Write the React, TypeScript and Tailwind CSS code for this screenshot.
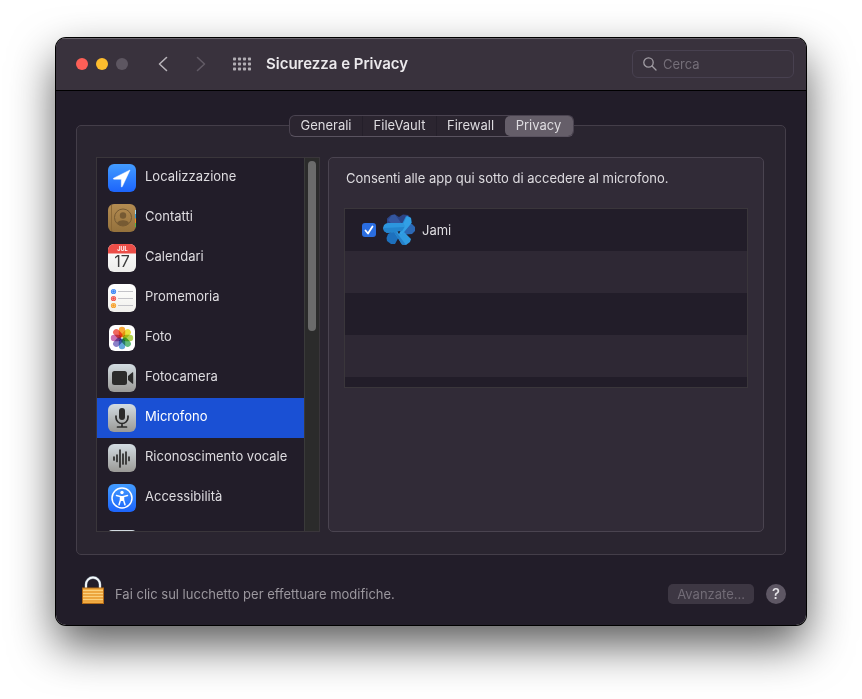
import type { ReactNode } from "react"
import clsx from "clsx"

const IconBase = ({ id, from, to, children }: { id: string; from: string; to: string; children: ReactNode }) => (
  <svg viewBox="0 0 28 28" className="size-7 shrink-0" aria-hidden="true">
    <defs>
      <linearGradient id={id} x1="0" y1="0" x2="0" y2="1">
        <stop offset="0" stopColor={from} />
        <stop offset="1" stopColor={to} />
      </linearGradient>
    </defs>
    <rect width="28" height="28" rx="6" fill={`url(#${id})`} />
    {children}
  </svg>
)

const LocationIcon = () => (
  <IconBase id="location" from="#439cff" to="#1c64fb">
    <path d="M22 6 5.6 14.2q-.9.8.4 1h7.3v7.3q.3 1.1 1 .1Z" fill="#fff" stroke="#fff" strokeWidth=".5" strokeLinejoin="round" />
  </IconBase>
)

const ContactsIcon = () => (
  <IconBase id="contacts" from="#b38b51" to="#94713c">
    <path d="M27 6h1v4h-1z" fill="#a9dcf2" />
    <path d="M27 10h1v4.500h-1z" fill="#2f9bd8" />
    <path d="M27 14.500h1V19h-1z" fill="#ee8d22" />
    <path d="M27 19h1v4h-1z" fill="#53b548" />
    <path d="M3.500 1v26" stroke="#8a6736" strokeWidth="1" />
    <circle cx="15" cy="13.500" r="8.500" fill="none" stroke="#765a33" strokeWidth="1" />
    <circle cx="15" cy="11.500" r="3.200" fill="#765a33" />
    <path d="M9 19.200c1-4 11-4 12 0a8 8 0 0 1-12 0Z" fill="#765a33" />
  </IconBase>
)

const CalendarIcon = () => (
  <IconBase id="calendar" from="#ffffff" to="#ededeb">
    <path d="M0 9.500V6a6 6 0 0 1 6-6h16a6 6 0 0 1 6 6v3.500Z" fill="#ec4e48" />
    <text x="14.500" y="7.200" textAnchor="middle" fontSize="5.500" fontWeight="700" fill="#fff">JUL</text>
    <text x="14" y="23" textAnchor="middle" fontSize="16" fill="#3c3c3c">17</text>
  </IconBase>
)

const reminders = [
  { y: 7.5, fill: "#2f7ff5" },
  { y: 14.5, fill: "#ee4b41" },
  { y: 21.5, fill: "#f59a1c" },
]

const RemindersIcon = () => (
  <IconBase id="reminders" from="#ffffff" to="#f1f0ec">
    <path d="M10 7.500h15M10 14.500h15M10 21.500h15" stroke="#c3c3c8" strokeWidth="1" />
    {reminders.map(({ y, fill }) => (
      <g key={y}>
        <circle cx="5.500" cy={y} r="2.600" fill={fill} />
        <circle cx="5.500" cy={y} r="1.500" fill="none" stroke="#fff" strokeWidth=".4" />
      </g>
    ))}
  </IconBase>
)

const petals = ["#f99b1c", "#e8dc1f", "#a7cc3a", "#4cb26a", "#4f9bd6", "#7b6fc0", "#c45fa8", "#ee5247"]

const PhotosIcon = () => (
  <svg viewBox="0 0 28 28" className="size-7 shrink-0" aria-hidden="true">
    <rect x="1" y="1" width="26" height="26" rx="6" fill="#fff" />
    {petals.map((color, i) => (
      <rect
        key={color}
        x="10.800"
        y="2.800"
        width="6.400"
        height="10.400"
        rx="3.200"
        fill={color}
        fillOpacity=".88"
        transform={`rotate(${i * 45} 14 14)`}
        className="mix-blend-multiply"
      />
    ))}
  </svg>
)

const CameraIcon = () => (
  <IconBase id="camera" from="#d3dce2" to="#9a9996">
    <rect x="4" y="7" width="15" height="14" rx="2.500" fill="#2b2b2b" />
    <path d="m20 12 4.500-3.700q.7-.3.700.5v10.400q0 .8-.7.500L20 16Z" fill="#2b2b2b" />
  </IconBase>
)

const MicrophoneIcon = () => (
  <IconBase id="microphone" from="#d3dce2" to="#9a9996">
    <rect x="11" y="4" width="6" height="12" rx="3" fill="#2b2b2b" />
    <path d="M8 12v1.500a6 6 0 0 0 12 0V12M14 19.500V23M9.500 23h9" fill="none" stroke="#2b2b2b" strokeWidth="1.700" strokeLinecap="round" />
  </IconBase>
)

const SpeechIcon = () => (
  <IconBase id="speech" from="#d3dce2" to="#9a9996">
    <path
      d="M6 13v3M9 11v6.500M12 6v17M15 10v10M18 8v12M21 13v3.500"
      stroke="#2b2b2b"
      strokeWidth="1.700"
      strokeLinecap="round"
    />
  </IconBase>
)

const AccessibilityIcon = () => (
  <IconBase id="accessibility" from="#439cff" to="#1c64fb">
    <circle cx="14" cy="14" r="10" fill="none" stroke="#fff" strokeWidth="1.500" />
    <circle cx="14" cy="8.500" r="1.700" fill="#fff" />
    <path d="M8.500 11.500 12.500 12.500V16L11 20.700M19.500 11.500 15.500 12.500V16L17 20.700" fill="none" stroke="#fff" strokeWidth="1.500" strokeLinecap="round" />
    <path d="M12 12h4v5h-4Z" fill="#fff" />
  </IconBase>
)

const JamiLogo = () => (
  <svg viewBox="0 0 32 32" className="size-8 shrink-0" aria-hidden="true">
    {/* ribbons at the back */}
    <path d="M4 4.500 8 1l4-.5 4 2.500 4-2.500L25 1l3 3.500v6H4Z" fill="#2c4486" />
    <path d="m9 1 3-.5L21 13l-6 4L5 6Z" fill="#34569f" />
    <path d="M20 10h9l3 3v4l-3 3-13 1Z" fill="#2c68b4" />
    <path d="m5 20 9-5 4 4-6 11H8l-4-3-.5-3Z" fill="#1d70bd" />
    {/* ribbons in front */}
    <path d="m11 18 6-4 11 11-1 3-4 3-4-.5Z" fill="#2f9ae0" />
    <path d="m11 18 1.500-1L23 31l-4-.5Z" fill="#2580c9" />
    <path d="m19 10 4-8 5 2 .5 5-10 12-6-4Z" fill="#2689d6" />
    <path d="m24 2 4 2 .5 5-10 12-3-2Z" fill="#329fe5" />
    <path d="M1 11q2-2 4-2h15l2 3-3 5-15 2-3-2-1-3Z" fill="#2c96de" />
    <path d="m.5 14 21-1-2.500 4-15 2-3-2Z" fill="#2384cd" />
    <path d="m14.500 17.500 3-.5-1.500 3Z" fill="#221d29" />
  </svg>
)

const LockIcon = () => (
  <svg viewBox="0 0 22 28" className="h-7 w-[22px] shrink-0" aria-hidden="true">
    <path d="M4 13V8.500a7 7 0 0 1 14 0V13" fill="none" stroke="#6e7a86" strokeWidth="2.800" />
    <path d="M4 13V8.500a7 7 0 0 1 14 0V13" fill="none" stroke="#f4f8fb" strokeWidth="1.900" />
    <rect x=".5" y="12" width="21" height="15.500" fill="#f3ad43" stroke="#b26a17" />
    <path d="M1 14.500h20M1 17.500h20M1 20.500h20M1 23.500h20" stroke="#fbd07c" strokeWidth="1" />
    <path d="M1 16h20M1 19h20M1 22h20M1 25h20" stroke="#df9836" strokeWidth=".6" />
  </svg>
)

const tabs = [
  { name: "Generali", width: "w-[73px]" },
  { name: "FileVault", width: "w-[74px]" },
  { name: "Firewall", width: "w-[68px]" },
  { name: "Privacy", width: "w-[68px]" },
]

const categories = [
  { name: "Localizzazione", icon: <LocationIcon /> },
  { name: "Contatti", icon: <ContactsIcon /> },
  { name: "Calendari", icon: <CalendarIcon /> },
  { name: "Promemoria", icon: <RemindersIcon /> },
  { name: "Foto", icon: <PhotosIcon /> },
  { name: "Fotocamera", icon: <CameraIcon /> },
  { name: "Microfono", icon: <MicrophoneIcon /> },
  { name: "Riconoscimento vocale", icon: <SpeechIcon /> },
  { name: "Accessibilità", icon: <AccessibilityIcon /> },
]

const TitleBar = () => (
  <header className="flex h-[53px] items-center border-b border-black bg-[#39323d] pr-3 pl-5 shadow-[inset_0_1px_0_#68636b]">
    <div className="flex gap-2">
      <button aria-label="Chiudi" className="size-3 rounded-full bg-[#fc5f57]" />
      <button aria-label="Riduci" className="size-3 rounded-full bg-[#fdbd2e]" />
      <button aria-label="Ingrandisci" disabled className="size-3 rounded-full bg-[#5d5661]" />
    </div>
    <button aria-label="Indietro" className="ml-[29px]">
      <svg viewBox="0 0 12 16" className="h-4 w-3" fill="none" stroke="#b7b3b9" strokeWidth="1.600" strokeLinecap="round" strokeLinejoin="round">
        <path d="M9.500 1.500 2.500 8l7 6.500" />
      </svg>
    </button>
    <button aria-label="Avanti" disabled className="ml-[26px]">
      <svg viewBox="0 0 12 16" className="h-4 w-3" fill="none" stroke="#615a65" strokeWidth="1.600" strokeLinecap="round" strokeLinejoin="round">
        <path d="m2.500 1.500 7 6.500-7 6.500" />
      </svg>
    </button>
    <button aria-label="Mostra tutte" className="ml-[26px]">
      <svg viewBox="0 0 18 14" className="h-3.5 w-[18px]" fill="#b1adb3">
        {[0, 1, 2].map((row) =>
          [0, 1, 2, 3].map((col) => (
            <rect key={`${row}-${col}`} x={col * 5} y={row * 5 + 0.5} width="3" height="3" rx=".7" />
          ))
        )}
      </svg>
    </button>
    <h1 className="ml-[15px] text-[15px] font-semibold text-[#ebe9ec]">Sicurezza e Privacy</h1>
    <label className="ml-auto flex h-7 w-[162px] items-center gap-1.5 rounded-md border border-[#484150] px-2.5">
      <svg viewBox="0 0 14 14" className="size-3.5 shrink-0" fill="none" stroke="#a19da4" strokeWidth="1.300" strokeLinecap="round">
        <circle cx="5.500" cy="5.500" r="4.700" />
        <path d="m9 9 4 4" />
      </svg>
      <input
        type="text"
        aria-label="Cerca"
        placeholder="Cerca"
        className="w-full min-w-0 bg-transparent text-[13px] outline-none placeholder:text-[#746e78]"
      />
    </label>
  </header>
)

const Tabs = () => (
  <div role="tablist" className="relative -mb-3 flex h-[22px] rounded-md border border-[#4a4350] border-b-[#5a5360] bg-[#2b2530]">
    {tabs.map(({ name, width }) => (
      <button
        key={name}
        role="tab"
        aria-selected={name === "Privacy"}
        className={clsx(
          "flex items-center justify-center pb-0.5",
          width,
          name === "Privacy" && "rounded-[5px] bg-[#655e69]",
          (name === "Generali" || name === "FileVault") && "shadow-[inset_-1px_0_0_#241f2a]"
        )}
      >
        {name}
      </button>
    ))}
  </div>
)

const Sidebar = () => (
  <nav aria-label="Categorie" className="flex h-[375px] w-56 shrink-0 border border-[#3a363b] bg-[#221d29]">
    <ul className="flex-1 overflow-hidden">
      {categories.map(({ name, icon }) => (
        <li key={name}>
          <button
            className={clsx(
              "flex h-10 w-full items-center gap-[9px] pl-[11px] text-left",
              name === "Microfono" && "bg-[#1a50d4] text-white"
            )}
          >
            {icon}
            <span className="pb-1">{name}</span>
          </button>
        </li>
      ))}
      <li className="pt-3 pl-[11px]">
        <div className="size-7 rounded-sm bg-[#d3dce2]" />
      </li>
    </ul>
    <div className="w-[15px] shrink-0 border-l border-[#3a3a3a] bg-[#2b2b2b] px-[3px] pt-[3px]">
      <div className="h-[170px] rounded-full bg-[#6b6b6b]" />
    </div>
  </nav>
)

const AppList = () => (
  <div className="mt-5 h-[180px] overflow-hidden border border-[#3a363b] bg-[#221d29]">
    <table className="w-full border-collapse">
      <tbody>
        <tr className="h-[42px]">
          <td className="p-0">
            <label className="flex items-center gap-[7px] pl-[17px]">
              <span className="grid size-3.5 place-items-center">
                <input
                  type="checkbox"
                  defaultChecked
                  className="col-start-1 row-start-1 size-3.5 appearance-none rounded-[3px] bg-[#2a6de0]"
                />
                <svg viewBox="0 0 14 14" className="pointer-events-none col-start-1 row-start-1 size-3.5" fill="none" stroke="#fff" strokeWidth="1.800" strokeLinecap="round" strokeLinejoin="round">
                  <path d="m3.500 7.500 2.500 3 4.500-7" />
                </svg>
              </span>
              <JamiLogo />
              <span>Jami</span>
            </label>
          </td>
        </tr>
        <tr className="h-[42px] bg-[#2e2834]"><td /></tr>
        <tr className="h-[42px]"><td /></tr>
        <tr className="h-[42px] bg-[#2e2834]"><td /></tr>
      </tbody>
    </table>
  </div>
)

export default function App() {
  return (
    <div className="min-h-screen bg-white px-14 pt-[38px] pb-[74px] font-['Inter','Liberation_Sans',sans-serif] text-[13px] leading-5 text-[#dedce0]">
      <div className="rounded-[10px] shadow-[0_0_0_1px_#000,0_20px_45px_rgba(0,0,0,0.65)]">
        <div className="overflow-hidden rounded-[10px] bg-[#221d29]">
          <TitleBar />
          <main className="flex flex-col items-center px-5 pt-6">
            <Tabs />
            <section className="w-full rounded-[5px] border border-[#443e49] bg-[#2a2530] pt-[31px] pr-[21px] pb-[22px] pl-[19px]">
              <div className="flex gap-2">
                <Sidebar />
                <div className="min-w-0 flex-1 rounded-[5px] border border-[#4a4450] bg-[#312b37] px-[15px] pt-2.5">
                  <p className="pl-0.5">Consenti alle app qui sotto di accedere al microfono.</p>
                  <AppList />
                </div>
              </div>
            </section>
          </main>
          <footer className="flex h-[70px] items-end pr-5 pb-[21px] pl-[26px]">
            <LockIcon />
            <p className="ml-[11px] text-[#9b979e]">Fai clic sul lucchetto per effettuare modifiche.</p>
            <button disabled className="ml-auto h-5 rounded-[5px] bg-[#3d3743] px-[9px] text-[#716b76]">
              Avanzate...
            </button>
            <button aria-label="Aiuto" className="ml-3 size-5 rounded-full bg-[#5e5764] text-[15px] font-medium text-[#e6e4e8]">
              ?
            </button>
          </footer>
        </div>
      </div>
    </div>
  )
}
